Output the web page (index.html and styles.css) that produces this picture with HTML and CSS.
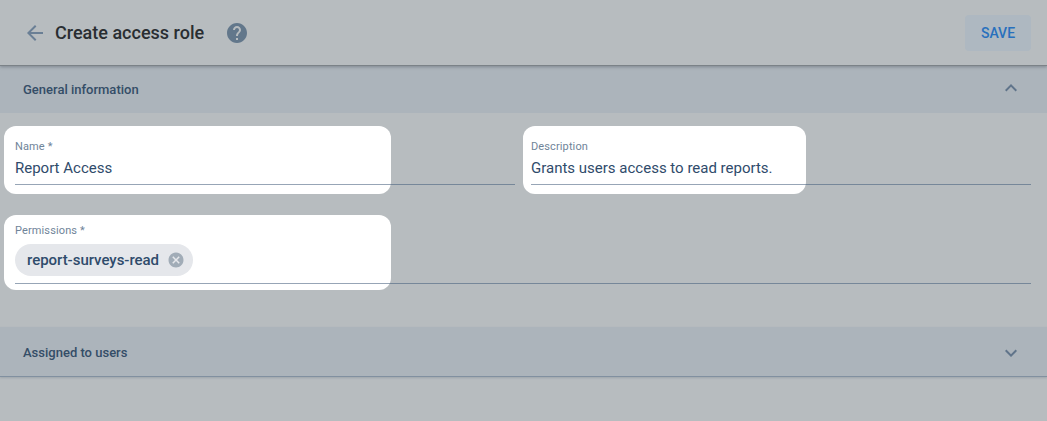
FILE: index.html
```html
<!DOCTYPE html>
<html lang="en">
<head>
<meta charset="utf-8">
<title>Create access role</title>
<link rel="stylesheet" href="styles.css">
</head>
<body>
<header class="toolbar">
  <svg class="back" viewBox="0 0 24 24"><path d="M20 11H7.83l5.59-5.59L12 4l-8 8 8 8 1.41-1.41L7.83 13H20z"/></svg>
  <h1 class="title">Create access role</h1>
  <svg class="help" viewBox="0 0 24 24"><path d="M12 2C6.48 2 2 6.48 2 12s4.480 10 10 10 10-4.480 10-10S17.520 2 12 2zm1 17h-2v-2h2v2zm2.070-7.750l-.9.920C13.450 12.900 13 13.500 13 15h-2v-.5c0-1.100.450-2.100 1.170-2.830l1.240-1.260c.370-.360.590-.860.590-1.410 0-1.100-.9-2-2-2s-2 .9-2 2H8c0-2.210 1.790-4 4-4s4 1.790 4 4c0 .880-.360 1.680-.930 2.250z"/></svg>
  <button class="save">SAVE</button>
</header>
<main>
  <section>
    <div class="panel-header general">
      <h2 class="panel-title">General information</h2>
      <svg class="chevron" viewBox="0 0 24 24"><path d="M12 8l-6 6 1.410 1.410L12 10.830l4.590 4.580L18 14z"/></svg>
    </div>
    <div class="panel-body">
      <div class="field name">
        <span class="label">Name *</span>
        <span class="value">Report Access</span>
      </div>
      <div class="field description">
        <span class="label">Description</span>
        <span class="value">Grants users access to read reports.</span>
      </div>
      <div class="field permissions">
        <span class="label">Permissions *</span>
        <span class="chip">
          <span class="chip-text">report-surveys-read</span>
          <svg class="remove" viewBox="0 0 24 24"><path d="M12 2C6.470 2 2 6.470 2 12s4.470 10 10 10 10-4.470 10-10S17.530 2 12 2zm5 13.590L15.590 17 12 13.410 8.410 17 7 15.590 10.590 12 7 8.410 8.410 7 12 10.590 15.590 7 17 8.410 13.410 12 17 15.590z"/></svg>
        </span>
      </div>
    </div>
  </section>
  <section class="panel-header assigned">
    <h2 class="panel-title">Assigned to users</h2>
    <svg class="chevron" viewBox="0 0 24 24"><path d="M16.590 8.590L12 13.170 7.410 8.590 6 10l6 6 6-6z"/></svg>
  </section>
</main>
</body>
</html>
```
FILE: styles.css
```css
* { box-sizing: border-box; }
body {
  margin: 0;
  height: 421px;
  overflow: hidden;
  background: #b7bcbf;
  color: #2f4b6b;
  font-family: Roboto, "Liberation Sans", sans-serif;
}
h1, h2 { margin: 0; }
svg { display: block; flex: none; }
.toolbar {
  position: relative;
  display: flex;
  align-items: center;
  height: 66px;
  padding: 0 16px 0 23px;
  border-bottom: 1px solid #7b8287;
  box-shadow: 0 1px 3px rgba(60, 70, 80, .4);
}
.back { width: 24px; height: 24px; fill: #6a7f95; }
.title {
  width: 150px;
  margin-left: 8px;
  color: #292e32;
  font-size: 18px;
  font-weight: 500;
  line-height: 24px;
  white-space: nowrap;
}
.help { width: 24px; height: 24px; margin-left: 19.500px; fill: #62778b; }
.save {
  width: 66px;
  height: 36px;
  margin-left: auto;
  padding: 0;
  border: 0;
  border-radius: 4px;
  background: #aeb8c1;
  color: #2870bd;
  font: 500 14px/36px Roboto, "Liberation Sans", sans-serif;
}
.panel-header {
  display: flex;
  align-items: center;
  justify-content: space-between;
  padding: 0 24px 0 23px;
  background: #acb4bb;
}
.general { height: 47px; }
.general .chevron { margin-bottom: 3px; }
.assigned {
  height: 50px;
  padding-top: 2px;
  border-bottom: 1px solid #8190a0;
  box-shadow: 0 1px 2px rgba(80, 95, 110, .25);
}
.panel-title { color: #344d67; font-size: 13px; font-weight: 500; line-height: 20px; }
.chevron { width: 24px; height: 24px; fill: #60748a; }
.panel-body {
  display: grid;
  grid-template-columns: 1fr 1fr;
  grid-template-rows: 68px 75px;
  gap: 21px 16px;
  height: 214px;
  padding: 13px 16px 0 15px;
}
.field {
  position: relative;
  isolation: isolate;
  display: flex;
  flex-direction: column;
  align-items: flex-start;
}
/* Spotlight behind the highlighted part of a field */
.field::before {
  content: "";
  position: absolute;
  z-index: -1;
  top: 0;
  bottom: 0;
  left: -11px;
  width: 387px;
  border-radius: 12px;
  background: #fff;
}
.description::before { left: -8px; width: 283px; }
/* Input underline, drawn across the spotlight edge */
.field::after {
  content: "";
  position: absolute;
  right: 0;
  bottom: 9px;
  left: 0;
  height: 1px;
  background: rgba(65, 91, 122, .55);
}
.permissions { grid-column: 1 / -1; }
.permissions::after { bottom: 6px; }
.label { margin-top: 13px; color: #6f8499; font-size: 11px; line-height: 16px; letter-spacing: .12px; }
.value { margin-top: 3px; font-size: 15px; line-height: 20px; white-space: nowrap; }
.permissions .label { margin-top: 8px; }
.chip {
  display: flex;
  align-items: center;
  width: 178px;
  height: 32px;
  margin-top: 5px;
  padding-left: 12px;
  border-radius: 16px;
  background: #e5e7eb;
}
.chip-text { width: 132px; font-size: 15px; font-weight: 500; letter-spacing: -.03px; white-space: nowrap; }
.remove { width: 18px; height: 18px; margin-left: 8px; fill: #a1acb7; }
```
